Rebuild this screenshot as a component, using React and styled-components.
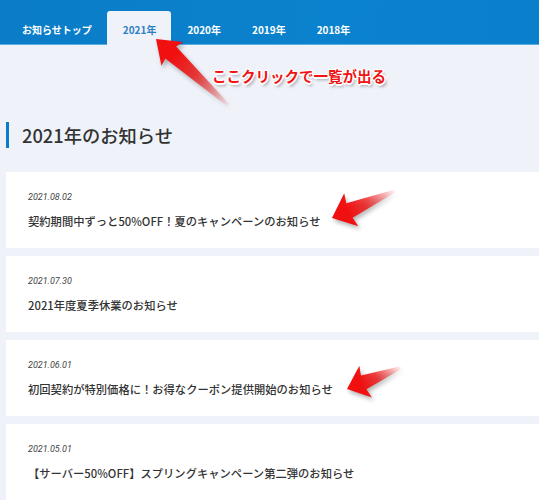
import React from "react";
import styled, { createGlobalStyle } from "styled-components";

const GlobalStyle = createGlobalStyle`
  html, body {
    margin: 0;
    padding: 0;
    background: #eff3f9;
    font-family: "Noto Sans CJK JP", "Noto Sans", sans-serif;
    color: #333;
  }
  * { box-sizing: border-box; }
`;

const tabs = ["お知らせトップ", "2021年", "2020年", "2019年", "2018年"];

const news = [
  { date: "2021.08.02", title: "契約期間中ずっと50%OFF！夏のキャンペーンのお知らせ" },
  { date: "2021.07.30", title: "2021年度夏季休業のお知らせ" },
  { date: "2021.06.01", title: "初回契約が特別価格に！お得なクーポン提供開始のお知らせ" },
  { date: "2021.05.01", title: "【サーバー50%OFF】スプリングキャンペーン第二弾のお知らせ" },
];

// tip x, tip y, length, angle (deg), head length, head half width, shaft half width
const arrows = [
  { x: 156, y: 39, len: 98, angle: -137.5, hl: 22, hw: 16, sw: 8 },
  { x: 332, y: 218, len: 68, angle: 156.8, hl: 21, hw: 18, sw: 8 },
  { x: 347, y: 389, len: 58, angle: 158.4, hl: 20, hw: 17, sw: 7.5 },
];

function App() {
  return (
    <Page>
      <GlobalStyle />
      <Header>
        <Tabs>
          {tabs.map((t, i) => (
            <Tab key={t} $active={i === 1}>
              {t}
            </Tab>
          ))}
        </Tabs>
      </Header>

      <Main>
        <Heading>2021年のお知らせ</Heading>
        <List>
          {news.map((n) => (
            <Card key={n.date}>
              <Date>{n.date}</Date>
              <Title>{n.title}</Title>
            </Card>
          ))}
        </List>
      </Main>

      <Callout>ここクリックで一覧が出る</Callout>

      <Overlay width="539" height="500" viewBox="0 0 539 500">
        <defs>
          <linearGradient id="fade" x1="0" y1="0" x2="1" y2="0">
            <stop offset="0" stopColor="#f21818" stopOpacity="0.05" />
            <stop offset="0.45" stopColor="#ee1515" stopOpacity="0.8" />
            <stop offset="0.75" stopColor="#f01010" stopOpacity="1" />
            <stop offset="1" stopColor="#f01010" stopOpacity="1" />
          </linearGradient>
        </defs>
        {arrows.map((a, i) => (
          <g key={i} transform={`translate(${a.x} ${a.y}) rotate(${a.angle})`}>
            <polygon
              fill="url(#fade)"
              points={`0,0 ${-a.hl},${-a.hw} ${-a.hl + 2},${-a.sw} ${-a.len},-1.5 ${-a.len},1.5 ${-a.hl + 2},${a.sw} ${-a.hl},${a.hw}`}
            />
          </g>
        ))}
      </Overlay>
    </Page>
  );
}

const Page = styled.div`
  position: relative;
  width: 539px;
  height: 500px;
  overflow: hidden;
  background: #eff3f9;
`;

const Header = styled.header`
  height: 45px;
  background: linear-gradient(100deg, #0a7cc8 0%, #0b82cd 60%, #0a80cc 100%);
  border-bottom: 1px solid #5aaee0;
  display: flex;
  align-items: flex-end;
  padding-left: 6px;
`;

const Tabs = styled.nav`
  display: flex;
  height: 34px;
  margin-bottom: -1px;
`;

const Tab = styled.div`
  display: flex;
  align-items: center;
  justify-content: center;
  padding: 1px 15px 0 16px;
  height: 35px;
  font-size: 10px;
  font-weight: 700;
  color: ${(p) => (p.$active ? "#2f7fc4" : "#ffffff")};
  background: ${(p) => (p.$active ? "#eff3f9" : "transparent")};
  border-radius: 3px 3px 0 0;
`;

const Main = styled.main`
  padding: 77px 0 0 6px;
`;

const Heading = styled.h2`
  margin: 0 0 24px;
  height: 26px;
  line-height: 26px;
  border-left: 3px solid #0a7cc8;
  padding-left: 13px;
  font-size: 18.3px;
  font-weight: 500;
  color: #333;
`;

const List = styled.div`
  display: flex;
  flex-direction: column;
  gap: 8px;
`;

const Card = styled.article`
  background: #fff;
  height: 76px;
  padding: 18px 22px;
`;

const Date = styled.div`
  font-family: "Roboto", "Liberation Sans", sans-serif;
  font-style: italic;
  font-size: 9px;
  line-height: 14px;
  color: #444;
`;

const Title = styled.div`
  margin-top: 8px;
  font-size: 11.3px;
  line-height: 18px;
  font-weight: 500;
  color: #333;
`;

const Callout = styled.div`
  position: absolute;
  left: 212px;
  top: 66px;
  font-size: 14.5px;
  line-height: 20px;
  font-weight: 700;
  color: #f01414;
  text-shadow:
    -1px -1px 0 #fff, 1px -1px 0 #fff, -1px 1px 0 #fff, 1px 1px 0 #fff,
    0 -1.5px 0 #fff, 0 1.5px 0 #fff, -1.5px 0 0 #fff, 1.5px 0 0 #fff,
    2px 3px 3px rgba(0, 0, 0, 0.35);
`;

const Overlay = styled.svg`
  position: absolute;
  top: 0;
  left: 0;
  pointer-events: none;
  filter: drop-shadow(2px 3px 2px rgba(0, 0, 0, 0.3));
`;

export default App;
